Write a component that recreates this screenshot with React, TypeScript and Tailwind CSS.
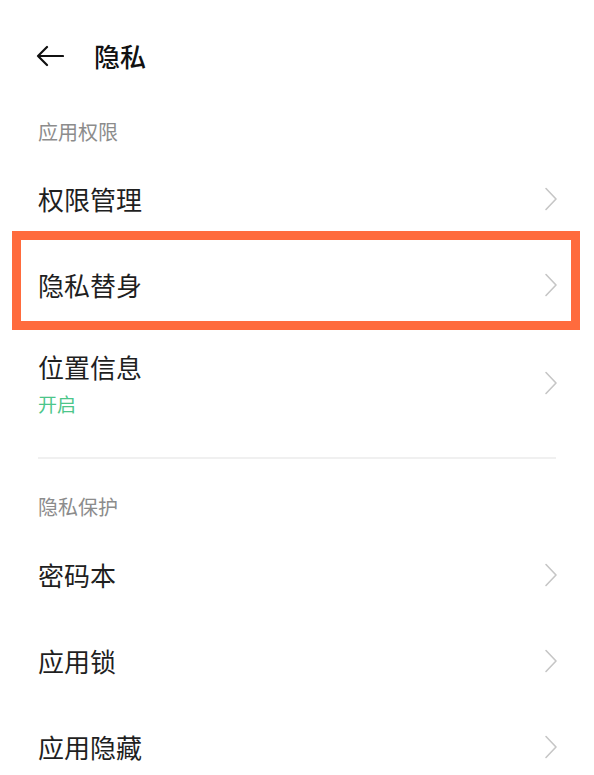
import React from 'react'

const font = { fontFamily: '"Noto Sans CJK SC", "Noto Sans", sans-serif' }

function Chevron() {
  return (
    <svg width="14" height="24" viewBox="0 0 14 24" fill="none" className="shrink-0">
      <path d="M2 1.5 L12 12 L2 22.5" stroke="#c6c6c6" strokeWidth="1.6" strokeLinecap="round" strokeLinejoin="round" />
    </svg>
  )
}

function Row({ title, sub, highlight }: { title: string; sub?: string; highlight?: boolean }) {
  if (sub) {
    return (
      <div className="flex items-center justify-between pl-[38px] pr-[36px] pt-[22px] pb-[18px]">
        <div className="flex flex-col">
          <span className="text-[26px] leading-[34px] text-[#1f1f1f]">{title}</span>
          <span className="mt-[8px] text-[19px] leading-[24px] text-[#4cc68a]">{sub}</span>
        </div>
        <Chevron />
      </div>
    )
  }
  return (
    <div className="relative flex h-[86px] items-center justify-between pl-[38px] pr-[36px]">
      <span className="text-[26px] leading-[34px] text-[#1f1f1f]">{title}</span>
      <Chevron />
      {highlight && (
        <div className="pointer-events-none absolute top-[-11px] bottom-[-2px] left-[12px] right-[14px] border-[9px] border-[#ff6b3d]" />
      )}
    </div>
  )
}

function SectionLabel({ text, className }: { text: string; className: string }) {
  return (
    <div className={`pl-[38px] text-[20px] leading-[24px] text-[#8c8c8c] ${className}`}>{text}</div>
  )
}

export default function App() {
  return (
    <div className="min-h-screen w-full bg-white" style={font}>
      {/* Header */}
      <div className="flex h-[112px] items-center pl-[36px]">
        <svg width="28" height="22" viewBox="0 0 28 22" fill="none">
          <path d="M27 11 H2 M11 2 L2 11 L11 20" stroke="#111" strokeWidth="2.2" strokeLinecap="round" strokeLinejoin="round" />
        </svg>
        <span className="ml-[30px] text-[26px] font-medium leading-[34px] text-[#111]">隐私</span>
      </div>

      <SectionLabel text="应用权限" className="pt-[8px] pb-[12px]" />
      <Row title="权限管理" />
      <Row title="隐私替身" highlight />
      <Row title="位置信息" sub="开启" />

      <div className="mx-[38px] mt-[23px] h-[2px] bg-[#f0f0f0]" />

      <SectionLabel text="隐私保护" className="pt-[36px] pb-[13px]" />
      <Row title="密码本" />
      <Row title="应用锁" />
      <Row title="应用隐藏" />
    </div>
  )
}
